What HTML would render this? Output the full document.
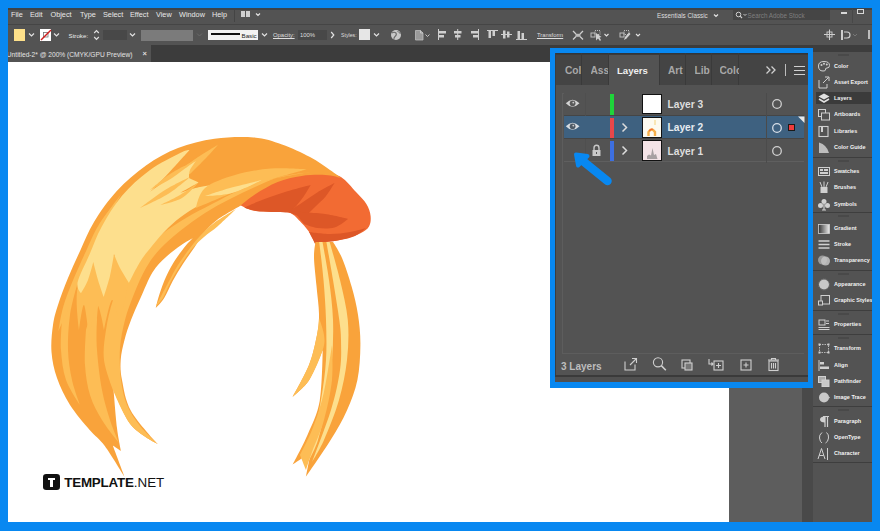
<!DOCTYPE html>
<html><head><meta charset="utf-8">
<style>
*{margin:0;padding:0;box-sizing:border-box}
html,body{width:880px;height:531px;overflow:hidden;background:#0888f1;font-family:"Liberation Sans",sans-serif}
.a{position:absolute}
#app{position:absolute;left:8px;top:8px;width:864px;height:514px;overflow:hidden;background:#535353}
.t{position:absolute;white-space:nowrap;color:#dedede;font-size:7px;line-height:9px}
.b{font-weight:bold}
svg{position:absolute;overflow:visible}
</style></head><body>
<!-- all coordinates page-absolute via wrapper offset -->
<div class="a" style="left:0;top:0;width:880px;height:531px">

<!-- APP BG -->
<div class="a" style="left:8px;top:8px;width:864px;height:514px;background:#535353"></div>

<!-- MENU BAR -->
<div class="a" style="left:8px;top:8px;width:864px;height:17px;background:#535353"></div>
<div class="a" style="left:8px;top:24px;width:864px;height:1px;background:#454545"></div>
<div class="a" style="left:8px;top:8px;width:864px;height:1.5px;background:#3c4248"></div>
<div class="t" style="left:11px;top:10.2px;font-size:7.3px;color:#e8e8e8">File</div>
<div class="t" style="left:30px;top:10.2px;font-size:7.3px;color:#e8e8e8">Edit</div>
<div class="t" style="left:50.5px;top:10.2px;font-size:7.3px;color:#e8e8e8">Object</div>
<div class="t" style="left:80px;top:10.2px;font-size:7.3px;color:#e8e8e8">Type</div>
<div class="t" style="left:103px;top:10.2px;font-size:7.3px;color:#e8e8e8">Select</div>
<div class="t" style="left:130px;top:10.2px;font-size:7.3px;color:#e8e8e8">Effect</div>
<div class="t" style="left:156px;top:10.2px;font-size:7.3px;color:#e8e8e8">View</div>
<div class="t" style="left:179px;top:10.2px;font-size:7.3px;color:#e8e8e8">Window</div>
<div class="t" style="left:212px;top:10.2px;font-size:7.3px;color:#e8e8e8">Help</div>
<div class="a" style="left:234px;top:10px;width:1px;height:12px;background:#444"></div>
<div class="a" style="left:241px;top:11px;width:4px;height:6px;background:#cfcfcf"></div>
<div class="a" style="left:246px;top:11px;width:4px;height:6px;background:#cfcfcf"></div>
<svg style="left:255px;top:12px" width="6" height="5"><path d="M1 1.5 L3 3.5 L5 1.5" stroke="#e2e2e2" stroke-width="1.2" fill="none"/></svg>
<div class="t" style="left:657px;top:10.5px;font-size:6.3px">Essentials Classic</div>
<svg style="left:713px;top:13px" width="6" height="5"><path d="M1 1.5 L3 3.5 L5 1.5" stroke="#e2e2e2" stroke-width="1.2" fill="none"/></svg>
<div class="a" style="left:733px;top:10px;width:97px;height:10px;background:#454545"></div>
<svg style="left:735px;top:11px" width="14" height="8"><circle cx="3.5" cy="3.5" r="2.3" stroke="#d0d0d0" stroke-width="1" fill="none"/><path d="M5.2 5.2 L7 7" stroke="#d0d0d0" stroke-width="1.2"/><path d="M8.5 3 L10 4.5 L11.5 3" stroke="#d0d0d0" stroke-width="0.9" fill="none"/></svg>
<div class="t" style="left:747.5px;top:10.5px;color:#7f7f7f;font-size:6.3px">Search Adobe Stock</div>
<div class="a" style="left:841px;top:12px;width:6px;height:2px;background:#d8d8d8"></div>
<div class="a" style="left:852px;top:9px;width:1px;height:14px;background:#484848"></div>
<div class="a" style="left:857px;top:9px;width:6.5px;height:5px;border:1px solid #d8d8d8;border-top-width:1.5px"></div>

<!-- CONTROL BAR -->
<div class="a" style="left:8px;top:25px;width:864px;height:19.5px;background:#535353"></div>
<div class="a" style="left:14px;top:29px;width:11px;height:11.5px;background:#fde08a"></div>
<svg style="left:28px;top:32px" width="7" height="5"><path d="M1 1.5 L3.5 4 L6 1.5" stroke="#e2e2e2" stroke-width="1.2" fill="none"/></svg>
<div class="a" style="left:39.7px;top:29.3px;width:11.4px;height:11.6px;background:#fff"></div>
<svg style="left:39.7px;top:29.3px" width="12" height="12"><rect x="3.5" y="3.5" width="4.5" height="4.5" fill="none" stroke="#777" stroke-width="0.8"/><path d="M1 11 L11 1" stroke="#d01c1c" stroke-width="1.4"/></svg>
<svg style="left:53px;top:32px" width="7" height="5"><path d="M1 1.5 L3.5 4 L6 1.5" stroke="#e2e2e2" stroke-width="1.2" fill="none"/></svg>
<div class="t" style="left:68.5px;top:31px;font-size:6.2px;color:#ececec">Stroke:</div>
<svg style="left:93px;top:29px" width="7" height="12"><path d="M1.2 4 L3.5 1.7 L5.8 4 M1.2 8 L3.5 10.3 L5.8 8" stroke="#e2e2e2" stroke-width="1.2" fill="none"/></svg>
<div class="a" style="left:102.8px;top:30.3px;width:24.2px;height:9.7px;background:#484848"></div>
<svg style="left:129px;top:32px" width="7" height="5"><path d="M1 1.5 L3.5 4 L6 1.5" stroke="#e2e2e2" stroke-width="1.2" fill="none"/></svg>
<div class="a" style="left:141px;top:29.5px;width:52px;height:11px;background:#7b7b7b"></div>
<svg style="left:196px;top:32px" width="7" height="5"><path d="M1 1.5 L3.5 4 L6 1.5" stroke="#6a6a6a" stroke-width="1" fill="none"/></svg>
<div class="a" style="left:207.8px;top:29.8px;width:50.7px;height:10.5px;background:#f2f2f2"></div>
<div class="a" style="left:211px;top:33.3px;width:28.7px;height:2px;background:#111"></div>
<div class="t" style="left:241.5px;top:30.5px;color:#222;font-size:6.2px">Basic</div>
<svg style="left:261px;top:32px" width="7" height="5"><path d="M1 1.5 L3.5 4 L6 1.5" stroke="#e2e2e2" stroke-width="1.2" fill="none"/></svg>
<div class="t" style="left:273px;top:31px;text-decoration:underline;font-size:5.9px">Opacity:</div>
<div class="a" style="left:297.7px;top:29.8px;width:29.3px;height:10.5px;background:#484848"></div>
<div class="t" style="left:300px;top:31px;font-size:5.9px">100%</div>
<svg style="left:330px;top:31px" width="5" height="8"><path d="M1.2 1 L3.8 4 L1.2 7" stroke="#e2e2e2" stroke-width="1.2" fill="none"/></svg>
<div class="t" style="left:341px;top:31px;font-size:5.2px">Styles:</div>
<div class="a" style="left:359.4px;top:29.3px;width:11px;height:11px;background:#e6e6e6"></div>
<svg style="left:373px;top:32px" width="7" height="5"><path d="M1 1.5 L3.5 4 L6 1.5" stroke="#e2e2e2" stroke-width="1.2" fill="none"/></svg>
<svg style="left:390px;top:28.5px" width="12" height="12"><circle cx="6" cy="6" r="5" fill="#c8c8c8"/><path d="M2 4 Q4 2.5 6 4 Q7 6 5 7.5 Q3.5 9 4 10.5" stroke="#6a6a6a" stroke-width="1.1" fill="none"/><path d="M7.5 2 Q9 4 10.5 4.5" stroke="#6a6a6a" stroke-width="1" fill="none"/></svg>
<!-- doc icon + chevron -->
<svg style="left:414px;top:28.5px" width="18" height="12"><path d="M1.5 1.5 H6.5 L9 4 V11 H1.5 Z" fill="#9a9a9a" stroke="#bdbdbd" stroke-width="0.8"/><path d="M6.5 1.5 V4 H9" fill="none" stroke="#d0d0d0" stroke-width="0.8"/><path d="M11.5 5.5 L13.5 7.5 L15.5 5.5" stroke="#d0d0d0" stroke-width="0.9" fill="none"/></svg>
<!-- align icons -->
<svg style="left:436px;top:28px" width="100" height="13" id="alignicons">
 <g fill="#cfcfcf">
  <rect x="2" y="1" width="1" height="11"/><rect x="3" y="3" width="7" height="2.5"/><rect x="3" y="7" width="5" height="2.5"/>
  <rect x="21.2" y="1" width="1" height="11"/><rect x="18" y="3" width="7.5" height="2.5"/><rect x="19" y="7" width="5.5" height="2.5"/>
  <rect x="42" y="1" width="1" height="11"/><rect x="35" y="3" width="7" height="2.5"/><rect x="37" y="7" width="5" height="2.5"/>
  <rect x="51" y="2" width="11" height="1"/><rect x="52.5" y="3" width="2.5" height="7"/><rect x="56.5" y="3" width="2.5" height="5"/>
  <rect x="65" y="6" width="11" height="1"/><rect x="67" y="2.5" width="2.5" height="8"/><rect x="71" y="3.5" width="2.5" height="6"/>
  <rect x="80" y="11" width="11" height="1"/><rect x="81.5" y="3" width="2.5" height="8"/><rect x="85.5" y="5" width="2.5" height="6"/>
 </g>
</svg>
<div class="t" style="left:537px;top:31px;text-decoration:underline;font-size:5.8px">Transform</div>
<svg style="left:571px;top:28.5px" width="14" height="12"><path d="M2 2 L5 5 M12 2 L9 5 M2 10.5 L5 7.5 M12 10.5 L9 7.5" stroke="#cfcfcf" stroke-width="1.3"/><rect x="4.5" y="4.8" width="5" height="3" fill="#bdbdbd"/></svg>
<svg style="left:589px;top:28.5px" width="22" height="12"><rect x="2" y="4" width="4" height="4" fill="none" stroke="#bdbdbd" stroke-width="1"/><rect x="6" y="1.5" width="5" height="4" fill="none" stroke="#bdbdbd" stroke-width="1" stroke-dasharray="1 1"/><path d="M7 4 L7 11.5 L9 9.5 L11 12 L12 11 L10.5 8.5 L12.5 8 Z" fill="#cfcfcf"/><path d="M15.5 5 L17.5 7 L19.5 5" stroke="#e2e2e2" stroke-width="1.1" fill="none"/></svg>
<svg style="left:618px;top:28.5px" width="24" height="12"><rect x="2" y="4" width="4" height="4" fill="none" stroke="#bdbdbd" stroke-width="1"/><rect x="6" y="1.5" width="5" height="4" fill="none" stroke="#bdbdbd" stroke-width="1" stroke-dasharray="1 1"/><path d="M6 11 L7 8 L11 3.5 L12.5 5 L8.5 9.5 Z" fill="#cfcfcf"/><path d="M18 5 L20 7 L22 5" stroke="#e2e2e2" stroke-width="1.1" fill="none"/></svg>
<svg style="left:823px;top:28.5px" width="14" height="12"><rect x="4" y="3" width="5" height="5" fill="none" stroke="#cfcfcf" stroke-width="0.9"/><path d="M6.5 0.5 V11 M1 5.5 H12" stroke="#cfcfcf" stroke-width="1"/></svg>
<svg style="left:840px;top:28.5px" width="22" height="12"><rect x="1" y="1" width="2" height="10" fill="#cfcfcf"/><path d="M4 3 H7 Q10 3 10 6 Q10 9 7 9 H4" stroke="#cfcfcf" stroke-width="1.2" fill="none"/><path d="M13 5 L15 7 L17 5" stroke="#7a7a7a" stroke-width="0.9" fill="none"/></svg>
<div class="a" style="left:868px;top:30px;width:2px;height:9px;background:#bdbdbd"></div>

<!-- TAB ROW -->
<div class="a" style="left:8px;top:44.5px;width:864px;height:17px;background:#3c3c3c"></div>
<div class="a" style="left:8px;top:44.5px;width:143px;height:17px;background:#535353"></div>
<div class="a" style="left:8px;top:44.5px;width:143px;height:17px;overflow:hidden"><div class="t" style="left:-1.2px;top:5px;font-size:6.65px;color:#e4e4e4">Untitled-2* @ 200% (CMYK/GPU Preview)</div></div>
<div class="t b" style="left:142.5px;top:49px;font-size:7.5px">×</div>

<!-- CANVAS -->
<div class="a" style="left:8px;top:61.5px;width:721px;height:460.5px;background:#ffffff"></div>
<div class="a" style="left:729px;top:61.5px;width:73px;height:460.5px;background:#5d5d5d"></div>
<div class="a" style="left:802px;top:61.5px;width:11px;height:460.5px;background:#494949"></div>

<svg style="left:0;top:0" width="880" height="531" viewBox="0 0 880 531">
<path fill="#f26b33" d="M238.0 204.0C238.0 204.0 247.7 194.3 254.0 190.0C260.3 185.7 268.3 181.0 276.0 178.0C283.7 175.0 291.8 172.8 300.0 172.0C308.2 171.2 318.2 172.2 325.0 173.0C331.8 173.8 335.8 173.8 341.0 177.0C346.2 180.2 351.8 187.5 356.0 192.0C360.2 196.5 364.0 200.0 366.4 204.0C368.8 208.0 370.2 212.2 370.6 216.0C371.0 219.8 370.6 223.7 369.0 226.5C367.4 229.3 364.8 231.0 361.0 233.0C357.2 235.0 351.3 236.9 346.0 238.4C340.7 239.9 334.2 241.0 329.0 241.8C323.8 242.7 315.0 243.5 315.0 243.5C315.0 243.5 312.2 236.7 310.0 233.3C307.8 229.9 305.0 226.4 301.6 223.0C298.2 219.6 294.5 214.6 289.7 212.8C284.9 211.0 278.3 212.3 272.6 212.0C266.9 211.7 259.9 211.6 255.6 211.0C251.3 210.4 249.9 209.8 247.0 208.6C244.1 207.4 238.0 204.0 238.0 204.0Z"/>
<path fill="#dd5727" d="M244.0 207.5C244.0 207.5 255.2 202.6 262.0 200.0C268.8 197.4 276.9 194.5 285.0 192.0C293.1 189.5 310.7 185.0 310.7 185.0C310.7 185.0 306.3 192.7 304.0 196.0C301.7 199.3 299.3 202.2 297.0 205.0C294.7 207.8 290.0 212.5 290.0 212.5C290.0 212.5 277.7 212.2 272.0 212.0C266.3 211.8 260.7 211.8 256.0 211.0C251.3 210.2 244.0 207.5 244.0 207.5Z"/>
<path fill="#dd5727" d="M288.0 212.0C288.0 212.0 298.0 205.3 303.0 202.0C308.0 198.7 312.8 195.2 318.0 192.0C323.2 188.8 334.5 183.0 334.5 183.0C334.5 183.0 329.2 192.0 326.0 196.0C322.8 200.0 318.7 203.3 315.0 207.0C311.3 210.7 304.0 218.0 304.0 218.0C304.0 218.0 288.0 212.0 288.0 212.0Z"/>
<path fill="#dd5727" d="M294.0 211.5C294.0 211.5 316.0 212.8 325.0 214.0C334.0 215.2 348.0 218.9 348.0 218.9C348.0 218.9 339.6 225.9 334.5 227.4C329.4 228.9 322.6 228.6 317.5 228.0C312.4 227.4 304.0 224.0 304.0 224.0C304.0 224.0 294.0 211.5 294.0 211.5Z"/>
<path fill="#dd5727" d="M309.0 232.0C309.0 232.0 323.2 234.0 330.0 234.0C336.8 234.0 344.0 233.0 350.0 232.0C356.0 231.0 366.0 228.0 366.0 228.0C366.0 228.0 359.3 234.0 355.0 236.0C350.7 238.0 345.0 239.0 340.0 240.0C335.0 241.0 329.2 241.4 325.0 242.0C320.8 242.6 315.0 243.5 315.0 243.5C315.0 243.5 309.0 232.0 309.0 232.0Z"/>
<path fill="#f9a33b" d="M315.5 242.0C315.5 242.0 333.0 242.0 333.0 242.0C333.0 242.0 338.9 250.6 342.0 258.0C345.1 265.4 348.9 277.1 351.6 286.5C354.3 295.9 356.5 304.9 358.0 314.7C359.5 324.4 360.5 334.1 360.4 345.0C360.3 355.9 359.6 369.1 357.4 380.0C355.1 390.9 351.4 400.3 346.9 410.4C342.4 420.5 337.1 429.6 330.3 440.6C323.5 451.7 306.0 476.7 306.0 476.7C306.0 476.7 310.7 452.6 310.7 452.6C310.7 452.6 292.6 464.7 292.6 464.7C292.6 464.7 303.2 445.1 307.7 434.5C312.2 423.9 317.2 415.1 319.7 401.0C322.2 386.9 322.7 350.0 322.7 350.0C322.7 350.0 314.2 372.2 309.2 380.0C304.2 387.8 292.6 396.9 292.6 396.9C292.6 396.9 304.9 375.3 309.0 365.0C313.1 354.7 315.3 343.5 317.0 335.0C318.7 326.5 319.1 322.2 319.0 314.0C318.9 305.8 317.3 295.3 316.5 286.0C315.7 276.7 314.2 265.3 314.0 258.0C313.8 250.7 315.5 242.0 315.5 242.0Z"/>
<path fill="#fdbd55" d="M319.0 318.0C319.0 318.0 323.4 329.7 324.0 335.0C324.6 340.3 325.2 342.5 322.7 350.0C320.2 357.5 314.2 372.2 309.2 380.0C304.2 387.8 292.6 396.9 292.6 396.9C292.6 396.9 304.9 375.3 309.0 365.0C313.1 354.7 315.3 342.8 317.0 335.0C318.7 327.2 319.0 318.0 319.0 318.0Z"/>
<path fill="#fddf8d" d="M319.2 242.0C319.2 242.0 322.5 242.0 322.5 242.0C322.5 242.0 327.2 267.0 329.0 280.0C330.8 293.0 332.5 306.7 333.0 320.0C333.5 333.3 333.0 346.7 332.0 360.0C331.0 373.3 329.3 386.7 327.0 400.0C324.7 413.3 321.2 429.7 318.0 440.0C314.8 450.3 308.0 462.0 308.0 462.0C308.0 462.0 310.8 450.3 313.0 440.0C315.2 429.7 318.8 413.3 321.0 400.0C323.2 386.7 325.2 373.3 326.0 360.0C326.8 346.7 326.4 333.3 326.0 320.0C325.6 306.7 324.6 293.0 323.5 280.0C322.4 267.0 319.2 242.0 319.2 242.0Z"/>
<path fill="#fddf8d" d="M326.4 242.0C326.4 242.0 329.6 242.0 329.6 242.0C329.6 242.0 337.0 267.0 340.0 280.0C343.0 293.0 346.6 306.7 347.8 320.0C349.0 333.3 348.5 346.7 347.0 360.0C345.5 373.3 342.8 386.7 339.0 400.0C335.2 413.3 328.5 429.7 324.0 440.0C319.5 450.3 312.0 462.0 312.0 462.0C312.0 462.0 326.3 425.3 331.0 410.0C335.7 394.7 338.3 381.7 340.0 370.0C341.7 358.3 341.1 348.3 341.0 340.0C340.9 331.7 340.6 330.0 339.3 320.0C338.0 310.0 335.1 293.0 333.0 280.0C330.9 267.0 326.4 242.0 326.4 242.0Z"/>
<path fill="#fdbd55" d="M300.0 455.0C300.0 455.0 308.3 439.2 312.0 430.0C315.7 420.8 319.3 410.0 322.0 400.0C324.7 390.0 326.3 379.2 328.0 370.0C329.7 360.8 332.0 345.0 332.0 345.0C332.0 345.0 333.3 367.5 332.0 380.0C330.7 392.5 327.3 408.0 324.0 420.0C320.7 432.0 315.0 443.7 312.0 452.0C309.0 460.3 306.0 470.0 306.0 470.0C306.0 470.0 300.0 455.0 300.0 455.0Z"/>
<path fill="#f9a33b" d="M124.6 477.0C124.6 477.0 110.6 453.8 104.8 446.0C99.0 438.2 95.5 436.8 89.7 430.0C83.9 423.2 75.5 413.7 70.0 405.0C64.5 396.3 60.1 386.8 57.0 378.0C53.9 369.2 52.2 360.8 51.5 352.0C50.8 343.2 51.9 332.8 53.0 325.0C54.1 317.2 55.5 312.8 58.0 305.0C60.5 297.2 64.2 287.2 68.0 278.0C71.8 268.8 76.2 259.3 80.5 250.0C84.8 240.7 88.0 231.8 94.0 222.0C100.0 212.2 108.1 200.4 116.8 191.0C125.5 181.6 135.8 172.7 146.0 165.5C156.2 158.3 166.6 152.4 178.0 148.0C189.4 143.6 201.9 140.6 214.5 138.8C227.1 137.1 242.3 136.6 253.6 137.5C264.9 138.4 272.6 141.2 282.0 144.5C291.4 147.8 302.0 152.8 310.0 157.0C318.0 161.2 324.8 166.5 330.0 170.0C335.2 173.5 341.0 178.0 341.0 178.0C341.0 178.0 332.1 175.3 325.5 175.0C318.9 174.7 309.6 174.8 301.6 176.0C293.6 177.2 285.4 179.0 277.7 182.0C270.0 185.0 261.9 190.0 255.6 194.0C249.3 198.0 240.0 206.0 240.0 206.0C240.0 206.0 223.2 215.3 217.0 220.0C210.8 224.7 206.7 229.5 203.0 234.0C199.3 238.5 198.0 242.0 194.7 247.0C191.3 252.0 186.6 258.3 182.9 264.0C179.2 269.7 175.8 275.3 172.7 281.0C169.6 286.7 167.0 293.5 164.2 298.0C161.4 302.5 155.8 308.0 155.8 308.0C155.8 308.0 156.9 302.5 158.3 298.0C159.7 293.5 161.8 286.7 164.2 281.0C166.6 275.3 169.3 269.7 172.7 264.0C176.1 258.3 181.2 251.3 184.6 247.0C188.0 242.7 193.0 238.0 193.0 238.0C193.0 238.0 185.5 242.1 181.0 245.3C176.5 248.5 170.8 252.5 166.0 257.0C161.2 261.5 156.7 265.6 152.4 272.4C148.2 279.2 144.1 290.1 140.5 298.0C136.9 305.9 133.7 313.0 131.0 320.0C128.3 327.0 126.2 333.3 124.5 340.0C122.8 346.7 121.1 353.3 120.7 360.0C120.3 366.7 120.3 371.5 122.0 380.0C123.7 388.5 125.1 400.3 131.0 411.0C136.9 421.7 157.6 444.0 157.6 444.0C157.6 444.0 138.3 434.2 131.0 425.0C123.7 415.8 113.5 389.0 113.5 389.0C113.5 389.0 115.8 417.7 117.0 428.0C118.2 438.3 121.0 451.0 121.0 451.0C121.0 451.0 112.8 445.5 112.8 445.5C112.8 445.5 124.6 477.0 124.6 477.0Z"/>
<path fill="#fdbd55" d="M178.0 172.0C178.0 172.0 191.3 161.6 198.0 157.0C204.7 152.4 218.0 144.7 218.0 144.7C218.0 144.7 210.7 153.1 206.0 158.0C201.3 162.9 190.0 174.0 190.0 174.0C190.0 174.0 178.0 172.0 178.0 172.0Z"/>
<path fill="#fdbd55" d="M310.0 172.0C310.0 172.0 289.2 174.5 280.0 177.0C270.8 179.5 263.3 183.3 255.0 187.0C246.7 190.7 238.3 194.7 230.0 199.0C221.7 203.3 213.3 207.7 205.0 213.0C196.7 218.3 187.5 225.0 180.0 231.0C172.5 237.0 165.7 242.8 160.0 249.0C154.3 255.2 150.3 260.5 146.0 268.0C141.7 275.5 137.5 285.3 134.0 294.0C130.5 302.7 127.3 311.0 125.0 320.0C122.7 329.0 120.7 338.0 120.0 348.0C119.3 358.0 119.8 370.5 121.0 380.0C122.2 389.5 123.8 397.3 127.0 405.0C130.2 412.7 134.9 419.5 140.0 426.0C145.1 432.5 157.6 444.0 157.6 444.0C157.6 444.0 138.4 434.0 131.0 425.0C123.6 416.0 113.0 390.0 113.0 390.0C113.0 390.0 105.2 370.0 104.0 360.0C102.8 350.0 104.5 340.0 106.0 330.0C107.5 320.0 109.8 309.3 113.0 300.0C116.2 290.7 120.2 282.0 125.0 274.0C129.8 266.0 135.8 258.7 142.0 252.0C148.2 245.3 154.7 239.7 162.0 234.0C169.3 228.3 177.7 223.0 186.0 218.0C194.3 213.0 203.3 208.5 212.0 204.0C220.7 199.5 228.7 195.0 238.0 191.0C247.3 187.0 256.0 183.2 268.0 180.0C280.0 176.8 310.0 172.0 310.0 172.0Z"/>
<path fill="#fdbd55" d="M86.0 330.0C86.0 330.0 91.7 311.7 94.0 305.0C96.3 298.3 100.0 290.0 100.0 290.0C100.0 290.0 97.5 310.0 97.0 320.0C96.5 330.0 96.2 338.3 97.0 350.0C97.8 361.7 99.8 378.3 102.0 390.0C104.2 401.7 107.2 411.2 110.0 420.0C112.8 428.8 119.0 443.0 119.0 443.0C119.0 443.0 106.8 428.0 102.0 420.0C97.2 412.0 92.8 404.2 90.0 395.0C87.2 385.8 85.7 375.8 85.0 365.0C84.3 354.2 86.0 330.0 86.0 330.0Z"/>
<path fill="#fdbd55" d="M62.0 320.0C62.0 320.0 67.5 303.8 70.0 298.0C72.5 292.2 77.0 285.0 77.0 285.0C77.0 285.0 71.5 304.2 70.0 315.0C68.5 325.8 67.7 339.2 68.0 350.0C68.3 360.8 70.0 370.8 72.0 380.0C74.0 389.2 80.0 405.0 80.0 405.0C80.0 405.0 69.2 389.2 66.0 380.0C62.8 370.8 61.7 360.0 61.0 350.0C60.3 340.0 62.0 320.0 62.0 320.0Z"/>
<path fill="#fdbd55" d="M236.0 209.0C236.0 209.0 220.0 218.5 214.0 223.0C208.0 227.5 204.0 231.8 200.0 236.0C196.0 240.2 193.7 243.2 190.0 248.0C186.3 252.8 181.7 259.2 178.0 265.0C174.3 270.8 171.7 276.2 168.0 283.0C164.3 289.8 156.0 306.0 156.0 306.0C156.0 306.0 160.7 301.8 163.0 298.0C165.3 294.2 167.2 288.3 170.0 283.0C172.8 277.7 176.3 271.7 180.0 266.0C183.7 260.3 188.0 253.8 192.0 249.0C196.0 244.2 199.7 240.8 204.0 237.0C208.3 233.2 212.7 230.7 218.0 226.0C223.3 221.3 236.0 209.0 236.0 209.0Z"/>
<path fill="#fdbd55" d="M58.4 331.1C58.4 331.1 60.8 315.0 63.3 306.5C65.8 298.0 69.4 289.1 73.1 280.1C76.8 271.1 81.2 261.5 85.5 252.3C89.8 243.1 92.8 234.6 98.7 224.9C104.7 215.2 121.2 194.3 121.2 194.3C121.2 194.3 108.5 217.8 103.4 227.8C98.3 237.9 94.7 245.5 90.5 254.6C86.3 263.7 81.9 273.3 78.2 282.2C74.5 291.1 71.9 299.9 68.6 308.0C65.3 316.1 58.4 331.1 58.4 331.1Z"/>
<path fill="#fdbd55" d="M88.0 257.0C88.0 257.0 130.0 255.0 130.0 255.0C130.0 255.0 128.8 278.8 127.0 290.0C125.2 301.2 119.0 322.0 119.0 322.0C119.0 322.0 114.5 298.7 112.0 300.0C109.5 301.3 104.0 330.0 104.0 330.0C104.0 330.0 99.5 303.7 97.0 305.0C94.5 306.3 89.0 338.0 89.0 338.0C89.0 338.0 85.7 306.3 84.0 305.0C82.3 303.7 79.0 330.0 79.0 330.0C79.0 330.0 75.5 304.2 77.0 292.0C78.5 279.8 88.0 257.0 88.0 257.0Z"/>
<path fill="#fddf8d" d="M81.0 293.0C81.0 293.0 76.2 288.8 77.6 282.3C79.0 275.8 85.6 263.5 89.6 254.2C93.6 244.9 96.3 236.4 101.7 226.7C107.1 216.9 114.0 205.1 122.0 195.7C129.9 186.3 139.6 177.6 149.4 170.4C159.2 163.2 173.9 156.2 180.6 152.8C187.3 149.4 189.5 150.0 189.5 150.0C189.5 150.0 180.6 160.0 176.0 165.0C171.4 170.0 166.3 175.5 162.0 180.0C157.7 184.5 150.0 192.0 150.0 192.0C150.0 192.0 164.3 181.2 172.0 176.0C179.7 170.8 196.0 161.0 196.0 161.0C196.0 161.0 191.2 167.2 190.0 170.0C188.8 172.8 189.0 178.0 189.0 178.0C189.0 178.0 198.6 182.5 198.6 182.5C198.6 182.5 180.0 193.0 180.0 193.0C180.0 193.0 193.0 188.5 200.0 187.0C207.0 185.5 214.5 184.8 222.0 184.0C229.5 183.2 245.0 182.0 245.0 182.0C245.0 182.0 231.7 188.7 225.0 192.0C218.3 195.3 211.7 198.3 205.0 202.0C198.3 205.7 191.2 209.7 185.0 214.0C178.8 218.3 173.5 222.7 168.0 228.0C162.5 233.3 156.7 240.3 152.0 246.0C147.3 251.7 143.8 255.8 140.0 262.0C136.2 268.2 129.0 283.0 129.0 283.0C129.0 283.0 122.5 272.8 120.0 268.0C117.5 263.2 114.0 254.0 114.0 254.0C114.0 254.0 111.7 268.8 110.0 276.0C108.3 283.2 103.7 297.0 103.7 297.0C103.7 297.0 99.7 285.8 98.0 280.0C96.3 274.2 93.3 262.0 93.3 262.0C93.3 262.0 90.0 274.8 88.0 280.0C86.0 285.2 81.0 293.0 81.0 293.0Z"/>
<path fill="#fdbd55" d="M150.0 190.0C150.0 190.0 162.3 179.0 170.0 174.0C177.7 169.0 196.0 160.0 196.0 160.0C196.0 160.0 179.7 173.0 172.0 178.0C164.3 183.0 150.0 190.0 150.0 190.0Z"/>
<path fill="#fdbd55" d="M140.0 208.0C140.0 208.0 156.7 195.2 165.0 190.0C173.3 184.8 190.0 177.0 190.0 177.0C190.0 177.0 176.3 188.8 168.0 194.0C159.7 199.2 140.0 208.0 140.0 208.0Z"/>
<path fill="#fdbd55" d="M160.0 205.0C160.0 205.0 173.6 198.8 180.0 195.0C186.4 191.2 198.6 182.5 198.6 182.5C198.6 182.5 188.4 194.2 182.0 198.0C175.6 201.8 160.0 205.0 160.0 205.0Z"/>
<path fill="#fdbd55" d="M196.0 208.0C196.0 208.0 224.5 195.8 237.0 191.0C249.5 186.2 259.3 183.1 271.0 179.5C282.7 175.9 307.0 169.3 307.0 169.3C307.0 169.3 283.0 167.6 271.0 168.5C259.0 169.4 246.0 171.8 235.0 175.0C224.0 178.2 211.5 182.5 205.0 188.0C198.5 193.5 196.0 208.0 196.0 208.0Z"/>
<path fill="#fddf8d" d="M205.0 196.0C205.0 196.0 220.5 190.7 230.0 188.0C239.5 185.3 262.0 180.0 262.0 180.0C262.0 180.0 241.5 190.3 232.0 193.0C222.5 195.7 205.0 196.0 205.0 196.0Z"/>
</svg><div class="a" style="left:43px;top:473.7px;width:16.7px;height:16.8px;background:#111;border-radius:3.2px"></div>
<div class="a" style="left:47.7px;top:477.7px;width:7.2px;height:2.6px;background:#fff"></div>
<div class="a" style="left:49.9px;top:477.7px;width:2.8px;height:9.3px;background:#fff"></div>
<div class="a" style="left:64.2px;top:474.6px;font-family:'Liberation Sans',sans-serif;font-size:13.4px;line-height:16px;color:#111;white-space:nowrap;letter-spacing:-0.2px"><b>TEMPLATE</b><span style="letter-spacing:0">.NET</span></div>


<!-- DOCK -->
<div class="a" style="left:813px;top:44.5px;width:59px;height:477.5px;background:#535353"></div>
<div class="a" style="left:813px;top:44.5px;width:59px;height:7.5px;background:#3d3d3d"></div>
<div class="a" style="left:0;top:0;width:872px;height:522px;overflow:hidden"><div class="a" style="left:816px;top:92.3px;width:55px;height:11.7px;background:#3b3b3b"></div>
<div class="a" style="left:813px;top:156.8px;width:59px;height:1px;background:#3e3e3e"></div>
<div class="a" style="left:813px;top:211.8px;width:59px;height:1px;background:#3e3e3e"></div>
<div class="a" style="left:813px;top:269.8px;width:59px;height:1px;background:#3e3e3e"></div>
<div class="a" style="left:813px;top:309.9px;width:59px;height:1px;background:#3e3e3e"></div>
<div class="a" style="left:813px;top:333.5px;width:59px;height:1px;background:#3e3e3e"></div>
<div class="a" style="left:813px;top:405.5px;width:59px;height:1px;background:#3e3e3e"></div>
<div class="a" style="left:813px;top:461.9px;width:59px;height:1px;background:#3e3e3e"></div>
<div class="a" style="left:838px;top:54px;width:11px;height:2px;background:#494949"></div>
<div class="a" style="left:838px;top:159.5px;width:11px;height:2px;background:#494949"></div>
<div class="a" style="left:838px;top:214.5px;width:11px;height:2px;background:#494949"></div>
<div class="a" style="left:838px;top:272.5px;width:11px;height:2px;background:#494949"></div>
<div class="a" style="left:838px;top:312.5px;width:11px;height:2px;background:#494949"></div>
<div class="a" style="left:838px;top:336.5px;width:11px;height:2px;background:#494949"></div>
<div class="a" style="left:838px;top:408.5px;width:11px;height:2px;background:#494949"></div>
<div class="t b" style="left:834px;top:61.5px;font-size:5.5px;color:#f2f2f2">Color</div>
<div class="t b" style="left:834px;top:77.5px;font-size:5.5px;color:#f2f2f2">Asset Export</div>
<div class="t b" style="left:834px;top:94.0px;font-size:5.5px;color:#f2f2f2">Layers</div>
<div class="t b" style="left:834px;top:110.2px;font-size:5.5px;color:#f2f2f2">Artboards</div>
<div class="t b" style="left:834px;top:126.5px;font-size:5.5px;color:#f2f2f2">Libraries</div>
<div class="t b" style="left:834px;top:142.8px;font-size:5.5px;color:#f2f2f2">Color Guide</div>
<div class="t b" style="left:834px;top:166.5px;font-size:5.5px;color:#f2f2f2">Swatches</div>
<div class="t b" style="left:834px;top:182.8px;font-size:5.5px;color:#f2f2f2">Brushes</div>
<div class="t b" style="left:834px;top:199.5px;font-size:5.5px;color:#f2f2f2">Symbols</div>
<div class="t b" style="left:834px;top:223.5px;font-size:5.5px;color:#f2f2f2">Gradient</div>
<div class="t b" style="left:834px;top:239.8px;font-size:5.5px;color:#f2f2f2">Stroke</div>
<div class="t b" style="left:834px;top:256.0px;font-size:5.5px;color:#f2f2f2">Transparency</div>
<div class="t b" style="left:834px;top:279.9px;font-size:5.5px;color:#f2f2f2">Appearance</div>
<div class="t b" style="left:834px;top:295.9px;font-size:5.5px;color:#f2f2f2">Graphic Styles</div>
<div class="t b" style="left:834px;top:320.0px;font-size:5.5px;color:#f2f2f2">Properties</div>
<div class="t b" style="left:834px;top:343.5px;font-size:5.5px;color:#f2f2f2">Transform</div>
<div class="t b" style="left:834px;top:360.5px;font-size:5.5px;color:#f2f2f2">Align</div>
<div class="t b" style="left:834px;top:376.5px;font-size:5.5px;color:#f2f2f2">Pathfinder</div>
<div class="t b" style="left:834px;top:392.5px;font-size:5.5px;color:#f2f2f2">Image Trace</div>
<div class="t b" style="left:834px;top:416.5px;font-size:5.5px;color:#f2f2f2">Paragraph</div>
<div class="t b" style="left:834px;top:432.8px;font-size:5.5px;color:#f2f2f2">OpenType</div>
<div class="t b" style="left:834px;top:448.8px;font-size:5.5px;color:#f2f2f2">Character</div>
<svg style="left:816.5px;top:59.5px" width="14" height="13"><path d="M1.5 6 Q1.5 1.5 7 1.5 Q12.5 1.5 12.5 5.5 Q12.5 8 10 8 Q8 8 8.5 10 Q8.5 11 6 11 Q1.5 11 1.5 6 Z" fill="none" stroke="#d0d0d0" stroke-width="1"/><circle cx="4.5" cy="5" r="1" fill="#d0d0d0"/><circle cx="7" cy="3.8" r="1" fill="#d0d0d0"/><circle cx="9.8" cy="4.5" r="1" fill="#d0d0d0"/></svg>
<svg style="left:816.5px;top:75.5px" width="14" height="13"><path d="M2 4 V12 H10 V8 M6 7 L11.5 1.5 M8 1 H12 V5" fill="none" stroke="#d0d0d0" stroke-width="1"/></svg>
<svg style="left:816.5px;top:92.0px" width="14" height="13"><path d="M7 1.5 L12.5 4.5 L7 7.5 L1.5 4.5 Z" fill="#e0e0e0"/><path d="M2 7 L7 10 L12 7" fill="none" stroke="#e0e0e0" stroke-width="1.6"/></svg>
<svg style="left:816.5px;top:108.2px" width="14" height="13"><rect x="1.5" y="1.5" width="7" height="7" fill="none" stroke="#d0d0d0" stroke-width="1"/><rect x="4.5" y="5" width="8" height="7" fill="#535353" stroke="#d0d0d0" stroke-width="1"/></svg>
<svg style="left:816.5px;top:124.5px" width="14" height="13"><rect x="2" y="1.5" width="9" height="10" fill="none" stroke="#d0d0d0" stroke-width="1.1"/><rect x="4" y="2" width="2" height="5" fill="#d0d0d0"/></svg>
<svg style="left:816.5px;top:140.8px" width="14" height="13"><path d="M2 12 L2 1.5 Q10 4 12 12 Z" fill="#bdbdbd"/></svg>
<svg style="left:816.5px;top:164.5px" width="14" height="13"><rect x="1.5" y="2.5" width="11" height="8" fill="none" stroke="#d0d0d0" stroke-width="1"/><rect x="3" y="4" width="3" height="2" fill="#d0d0d0"/><rect x="7" y="4" width="4" height="2" fill="#d0d0d0"/><rect x="3" y="7" width="8" height="2" fill="#d0d0d0"/></svg>
<svg style="left:816.5px;top:180.8px" width="14" height="13"><path d="M3 1 L5 6 M7 0.5 V6 M11 1 L9 6" stroke="#d0d0d0" stroke-width="1"/><rect x="3.5" y="6" width="7" height="6" fill="#d0d0d0"/></svg>
<svg style="left:816.5px;top:197.5px" width="14" height="13"><circle cx="7" cy="3.5" r="2.5" fill="#d0d0d0"/><circle cx="3.5" cy="7.5" r="2.5" fill="#d0d0d0"/><circle cx="10.5" cy="7.5" r="2.5" fill="#d0d0d0"/><path d="M7 6 V12 M5 12 H9" stroke="#d0d0d0" stroke-width="1.2"/></svg>
<svg style="left:816.5px;top:221.5px" width="14" height="13"><defs><linearGradient id="gg"><stop offset="0" stop-color="#333"/><stop offset="1" stop-color="#eee"/></linearGradient></defs><rect x="1.5" y="2.5" width="11" height="9" fill="url(#gg)" stroke="#d0d0d0" stroke-width="0.8"/></svg>
<svg style="left:816.5px;top:237.8px" width="14" height="13"><path d="M1.5 3 H12.5 M1.5 6.5 H12.5 M1.5 10 H12.5" stroke="#d0d0d0" stroke-width="1.5"/></svg>
<svg style="left:816.5px;top:254.0px" width="14" height="13"><circle cx="5.5" cy="6" r="4.5" fill="#9a9a9a"/><circle cx="8.5" cy="7" r="4.5" fill="#c4c4c4" opacity="0.85"/></svg>
<svg style="left:816.5px;top:277.9px" width="14" height="13"><circle cx="7" cy="6.5" r="5" fill="#c8c8c8"/><circle cx="7" cy="6.5" r="5.5" fill="none" stroke="#888" stroke-width="0.7" stroke-dasharray="1 1"/></svg>
<svg style="left:816.5px;top:293.9px" width="14" height="13"><rect x="4" y="1.5" width="8.5" height="8.5" fill="none" stroke="#d0d0d0" stroke-width="1"/><rect x="1.5" y="7" width="4" height="4" fill="#535353" stroke="#d0d0d0" stroke-width="1"/></svg>
<svg style="left:816.5px;top:318.0px" width="14" height="13"><rect x="2" y="2" width="6" height="5" fill="none" stroke="#d0d0d0" stroke-width="1"/><path d="M9 3 H12 M9 5.5 H12 M1.5 9.5 H12.5 M1.5 11.5 H12.5" stroke="#d0d0d0" stroke-width="1"/></svg>
<svg style="left:816.5px;top:341.5px" width="14" height="13"><rect x="2.5" y="2.5" width="9" height="8" fill="none" stroke="#d0d0d0" stroke-width="0.8" stroke-dasharray="1.5 1"/><rect x="1.5" y="1.5" width="2" height="2" fill="#d0d0d0"/><rect x="10.5" y="1.5" width="2" height="2" fill="#d0d0d0"/><rect x="1.5" y="9.5" width="2" height="2" fill="#d0d0d0"/><rect x="10.5" y="9.5" width="2" height="2" fill="#d0d0d0"/></svg>
<svg style="left:816.5px;top:358.5px" width="14" height="13"><rect x="1.5" y="1" width="1" height="11" fill="#d0d0d0"/><rect x="3" y="3" width="4" height="2.5" fill="#d0d0d0"/><rect x="3" y="7.5" width="9" height="2.5" fill="#d0d0d0"/></svg>
<svg style="left:816.5px;top:374.5px" width="14" height="13"><rect x="1.5" y="1.5" width="7" height="6" fill="#aaa" stroke="#d0d0d0" stroke-width="1"/><rect x="5" y="5" width="7" height="6.5" fill="#c8c8c8" stroke="#d0d0d0" stroke-width="1"/></svg>
<svg style="left:816.5px;top:390.5px" width="14" height="13"><circle cx="7" cy="6.5" r="5" fill="#c8c8c8"/><path d="M11.5 5 L13 6.5 L11.5 8" fill="#c8c8c8"/></svg>
<svg style="left:816.5px;top:414.5px" width="14" height="13"><path d="M6 1.5 H12 M8 1.5 V12 M10.5 1.5 V12" stroke="#d0d0d0" stroke-width="1.2"/><path d="M8 1.5 Q3 1.5 3 4.5 Q3 7.5 8 7.5 Z" fill="#d0d0d0"/></svg>
<svg style="left:816.5px;top:430.8px" width="14" height="13"><path d="M5 1.5 Q2 4 2.5 7 Q3 11 5 12 M9.5 1.5 Q12 3.5 11.5 7 Q11 11 8.5 12" fill="none" stroke="#d0d0d0" stroke-width="1"/></svg>
<svg style="left:816.5px;top:446.8px" width="14" height="13"><path d="M1 12 L4.5 1.5 L8 12 M2.3 8.5 H6.7" fill="none" stroke="#d0d0d0" stroke-width="1"/><rect x="10" y="1" width="1" height="12" fill="#d0d0d0"/></svg></div>

<!-- LAYERS PANEL -->
<div class="a" style="left:550px;top:48px;width:263px;height:340px;background:#0888f1"></div>
<div class="a" style="left:555px;top:53px;width:253px;height:329px;background:#535353"></div>
<div class="a" style="left:555px;top:53px;width:253px;height:32px;background:#444444"></div><div class="a" style="left:555px;top:53px;width:253px;height:2px;background:#3b3b3b"></div><div class="a" style="left:555px;top:53px;width:253px;height:1px;background:#30363c"></div><div class="a" style="left:555px;top:53px;width:1px;height:329px;background:#3a3d40"></div>
<div class="a" style="left:608px;top:55px;width:51px;height:30px;background:#535353"></div>
<div class="a" style="left:581px;top:53px;width:1px;height:32px;background:#3a3a3a"></div>
<div class="a" style="left:607.5px;top:53px;width:1px;height:32px;background:#3a3a3a"></div>
<div class="a" style="left:659px;top:53px;width:1px;height:32px;background:#3a3a3a"></div>
<div class="a" style="left:684.7px;top:53px;width:1px;height:32px;background:#3a3a3a"></div>
<div class="a" style="left:711px;top:53px;width:1px;height:32px;background:#3a3a3a"></div>
<div class="a" style="left:738.4px;top:53px;width:1px;height:32px;background:#3a3a3a"></div>
<div class="t" style="left:565px;top:64px;font-size:10.2px;font-weight:bold;line-height:13px;color:#a8a8a8;width:16px;overflow:hidden">Col</div>
<div class="t" style="left:590.5px;top:64px;font-size:10.2px;font-weight:bold;line-height:13px;color:#a8a8a8;width:17px;overflow:hidden">Ass</div>
<div class="t" style="left:617px;top:64px;font-size:9.6px;font-weight:bold;line-height:13px;color:#f0f0f0">Layers</div>
<div class="t" style="left:668px;top:64px;font-size:10.2px;font-weight:bold;line-height:13px;color:#a8a8a8;width:16px;overflow:hidden">Art</div>
<div class="t" style="left:694.5px;top:64px;font-size:10.2px;font-weight:bold;line-height:13px;color:#a8a8a8;width:15px;overflow:hidden">Lib</div>
<div class="t" style="left:719.5px;top:64px;font-size:10.2px;font-weight:bold;line-height:13px;color:#a8a8a8;width:19px;overflow:hidden">Colo</div>
<svg style="left:765px;top:65px" width="14" height="10"><path d="M1.5 1.5 L5 5 L1.5 8.5 M6.5 1.5 L10 5 L6.5 8.5" stroke="#d0d0d0" stroke-width="1.3" fill="none"/></svg>
<div class="a" style="left:785px;top:64px;width:1px;height:12px;background:#bdbdbd"></div>
<div class="a" style="left:793.5px;top:65.5px;width:11px;height:1.3px;background:#d0d0d0"></div>
<div class="a" style="left:793.5px;top:69.5px;width:11px;height:1.3px;background:#d0d0d0"></div>
<div class="a" style="left:793.5px;top:73.5px;width:11px;height:1.3px;background:#d0d0d0"></div>

<!-- list area -->
<div class="a" style="left:562px;top:92.5px;width:242px;height:261px;border:1px solid #5d5d5d;border-right:0;"></div>
<div class="a" style="left:804px;top:92.5px;width:4px;height:261px;background:#535353"></div>
<!-- rows -->
<div class="a" style="left:563.5px;top:92.5px;width:240.5px;height:23px;background:#535353;border-bottom:1px solid #454545"></div>
<div class="a" style="left:563.5px;top:115.5px;width:240.5px;height:23.2px;background:#3e6180;border-bottom:1px solid #454545"></div>
<div class="a" style="left:563.5px;top:138.7px;width:240.5px;height:23.6px;background:#535353;border-bottom:1px solid #5f5f5f"></div>
<!-- column separators -->
<div class="a" style="left:585px;top:92.5px;width:1px;height:23px;background:#4f4f4f"></div><div class="a" style="left:585px;top:138.7px;width:1px;height:23.6px;background:#4f4f4f"></div>
<div class="a" style="left:765.5px;top:92.5px;width:1px;height:70px;background:#4b4b4b"></div>
<!-- eye icons -->
<svg style="left:565px;top:99px" width="16" height="10"><path d="M0.8 4.3 Q7.5 -2.8 14.5 4.3 Q7.5 11.4 0.8 4.3 Z" fill="#d4d4d4"/><circle cx="7.6" cy="4.3" r="2.9" fill="#5a5a5a"/><circle cx="8.3" cy="3.6" r="0.9" fill="#cfcfcf"/></svg>
<svg style="left:565px;top:122.2px" width="16" height="10"><path d="M0.8 4.3 Q7.5 -2.8 14.5 4.3 Q7.5 11.4 0.8 4.3 Z" fill="#d8dde2"/><circle cx="7.6" cy="4.3" r="2.9" fill="#4e5a66"/><circle cx="8.3" cy="3.6" r="0.9" fill="#cfcfcf"/></svg>
<!-- lock -->
<svg style="left:591px;top:144px" width="11" height="13"><path d="M3 6 V4 Q3 1.3 5.5 1.3 Q8 1.3 8 4 V6" stroke="#c8c8c8" stroke-width="1.4" fill="none"/><rect x="1.5" y="6" width="8" height="6" fill="#c8c8c8"/><rect x="5" y="8" width="1" height="2" fill="#535353"/></svg>
<!-- color bars -->
<div class="a" style="left:610px;top:94px;width:3.5px;height:20.5px;background:#1ed43a"></div>
<div class="a" style="left:610px;top:117.5px;width:3.5px;height:20.5px;background:#e8474a"></div>
<div class="a" style="left:610px;top:140.5px;width:3.5px;height:20.5px;background:#3d6fe0"></div>
<!-- arrows -->
<svg style="left:620px;top:121.5px" width="9" height="11"><path d="M2.5 1.5 L6.5 5.5 L2.5 9.5" stroke="#dcdcdc" stroke-width="1.5" fill="none"/></svg>
<svg style="left:620px;top:145px" width="9" height="11"><path d="M2.5 1.5 L6.5 5.5 L2.5 9.5" stroke="#dcdcdc" stroke-width="1.5" fill="none"/></svg>
<!-- thumbnails -->
<div class="a" style="left:641.5px;top:93.8px;width:20.5px;height:20.5px;background:#fff;border:1.5px solid #111"></div>
<div class="a" style="left:641.5px;top:117px;width:20.5px;height:20.5px;background:#fdfaf0;border:1.5px solid #111"></div>
<svg style="left:643px;top:118.5px" width="18" height="18"><path d="M5.5 17 V13 Q8.5 8 12 13 V17" fill="none" stroke="#f7b04a" stroke-width="2.4"/><path d="M6.3 12 Q8.5 9.5 10 10.5" fill="none" stroke="#f26b33" stroke-width="1.2"/><path d="M12 1 V6" stroke="#f5d27a" stroke-width="1"/></svg>
<div class="a" style="left:641.5px;top:140.3px;width:20.5px;height:20.5px;background:#f4e3e7;border:1.5px solid #111"></div>
<svg style="left:643px;top:141.8px" width="18" height="18"><path d="M4 17 V14 L6 12.5 L8 13.5 L9.5 6 L11 13 L13 12 L14.5 17 Z" fill="#a8a0a2"/></svg>
<!-- layer names -->
<div class="t" style="left:667.5px;top:98px;font-size:10.2px;font-weight:bold;line-height:13px;color:#dedede">Layer 3</div>
<div class="t" style="left:667.5px;top:121px;font-size:10.2px;font-weight:bold;line-height:13px;color:#e6ebf0">Layer 2</div>
<div class="t" style="left:667.5px;top:144.5px;font-size:10.2px;font-weight:bold;line-height:13px;color:#dedede">Layer 1</div>
<!-- target circles -->
<svg style="left:771px;top:98px" width="12" height="12"><circle cx="6" cy="6" r="4.3" stroke="#cfcfcf" stroke-width="1.3" fill="none"/></svg>
<svg style="left:771px;top:121.5px" width="12" height="12"><circle cx="6" cy="6" r="4.3" stroke="#d5dde6" stroke-width="1.3" fill="none"/></svg>
<svg style="left:771px;top:145px" width="12" height="12"><circle cx="6" cy="6" r="4.3" stroke="#cfcfcf" stroke-width="1.3" fill="none"/></svg>
<div class="a" style="left:788px;top:124px;width:7px;height:7px;background:#ef3b3b;border:1.2px solid #1a1a1a"></div>
<svg style="left:797px;top:116px" width="8" height="8"><path d="M1 0.5 H7.5 V7 Z" fill="#e9e9e9"/></svg>

<!-- blue arrow annotation -->
<svg style="left:0;top:0" width="880" height="531"><path d="M576 154.5 L587.5 156 L578 165.5 Z" fill="#0888f1" stroke="#0888f1" stroke-width="4" stroke-linejoin="round"/><path d="M581 159.5 L607.5 181" stroke="#0888f1" stroke-width="8.5" stroke-linecap="round"/></svg>

<!-- footer -->
<div class="t" style="left:561px;top:359.5px;font-size:10px;font-weight:bold;line-height:13px;color:#bdbdbd">3 Layers</div>
<svg style="left:622px;top:356px" width="170" height="16" id="footicons">
 <g stroke="#cfcfcf" stroke-width="1.1" fill="none">
  <path d="M3 5.5 V14 H13 V8.5 M8 9 L14 3 M10 2.5 H14.5 V7"/>
  <circle cx="36" cy="6.3" r="4.6"/><path d="M39.3 9.6 L43.8 14.2" stroke-width="1.6"/>
  <rect x="60" y="4" width="8" height="8"/><rect x="63" y="7" width="7" height="7" fill="#777"/>
  <path d="M87 3 V8 H91 M89.5 6.5 L91 8 L89.5 9.5"/><rect x="92" y="5" width="9" height="9"/><path d="M96.5 7 V12 M94 9.5 H99"/>
  <rect x="119" y="4" width="10" height="10"/><path d="M124 6.5 V11.5 M121.5 9 H126.5"/>
  <path d="M146 4 H157 M149.5 4 V2.5 H153.5 V4"/><rect x="147" y="5" width="9" height="9.5"/><path d="M149.5 7 V12.5 M151.5 7 V12.5 M153.5 7 V12.5"/>
 </g>
</svg>
<div class="a" style="left:555px;top:375px;width:253px;height:2px;background:#3a3a3a"></div>
<div class="a" style="left:555px;top:377px;width:253px;height:5px;background:#505050"></div>


</div>
</body></html>
